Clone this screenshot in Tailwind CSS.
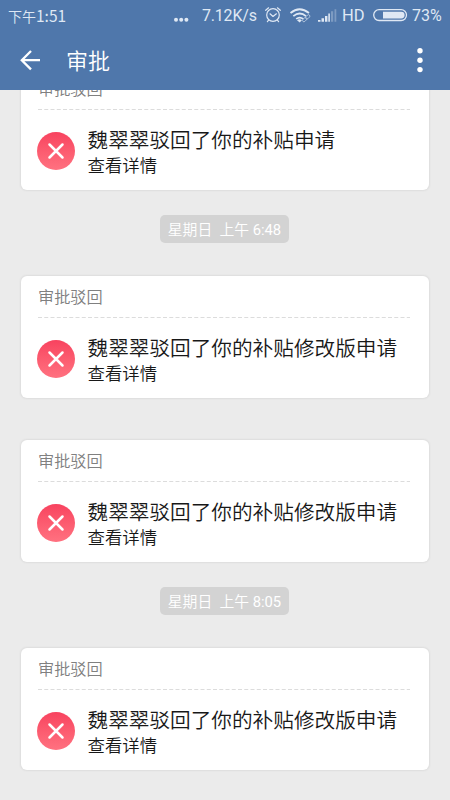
<!DOCTYPE html>
<html lang="zh-CN">
<head>
<meta charset="utf-8">
<meta name="viewport" content="width=device-width, initial-scale=1">
<title>审批</title>
<script src="https://cdn.jsdelivr.net/npm/@tailwindcss/browser@4"></script>
</head>
<body class="flex h-[800px] w-[450px] flex-col overflow-hidden bg-[#ebebeb] font-['Roboto','Noto_Sans_CJK_SC',sans-serif]">
<header class="h-[90px] shrink-0 bg-[#4f77ab]">
  <div class="flex h-8 items-center whitespace-nowrap pl-2 text-[#dfe8f4]">
    <span class="w-[166px] text-[14px] font-[350] font-['Noto_Sans_CJK_SC',sans-serif]">下午<span class="text-[15.5px] font-normal font-['Noto_Sans_CJK_SC']">1:51</span></span>
    <svg class="h-8 w-[28px]" viewBox="0 0 28 32" fill="currentColor"><circle cx="2" cy="19.700" r="2"/><circle cx="7.200" cy="19.700" r="2"/><circle cx="12.400" cy="19.700" r="2"/></svg>
    <span class="w-[62px] text-[16px] font-['Roboto'] tracking-[-0.2px]">7.12K/s</span>
    <svg class="h-8 w-[24px]" viewBox="264 0 24 32" fill="none" stroke="currentColor" stroke-width="1.200" stroke-linecap="round" stroke-linejoin="round"><circle cx="273" cy="15" r="6.300"/><path d="M270 13.800l3 2.700 3.400-2.700M265.700 10.300l2.900-2.500M280.300 10.300l-2.900-2.500M268.600 20.200l-1.200 1.500M277.400 20.200l1.200 1.500"/></svg>
    <svg class="h-8 w-[28px]" viewBox="288 0 28 32" fill="none" stroke="currentColor" stroke-width="1.800"><path d="M290.500 13q9-7.600 18.500 0M293.300 16.100q6.500-5.300 12.700 0M296.200 18.900q3.500-2.700 7 0"/><path d="M297 20.200l2.700 2.300 2.200-2.200q-2.400-1.800-4.900-.1z" fill="currentColor" stroke="none"/><g stroke-width=".9" opacity=".7"><rect x="302.200" y="18.200" width="5" height="2.800" rx="1.400" transform="rotate(-45 304.700 19.600)"/><rect x="305.200" y="15.500" width="5" height="2.800" rx="1.400" transform="rotate(-45 307.700 16.900)"/></g></svg>
    <svg class="h-8 w-[26px]" viewBox="316 0 26 32" fill="currentColor"><path d="M318 20h2.500v1.700H318zM321.500 18.200h2.500v3.500h-2.500zM325 16h2.400v5.700H325z"/><path d="M328.300 13.500h1.600v8.200h-1.600z"/><path opacity=".32" d="M331 11.200h2.200v10.500H331zM334.500 9.200h1.800v12.500h-1.800z"/></svg>
    <span class="w-[30px] text-[16.5px] font-['Roboto']">HD</span>
    <svg class="h-8 w-[40px]" viewBox="372 0 40 32" fill="none" stroke="currentColor" stroke-width="1.300"><rect x="373.700" y="9.700" width="32.800" height="10.800" rx="5.400"/><path d="M383 11.700h18.200a3.400 3.400 0 0 1 0 6.800H383z" fill="currentColor" stroke="none"/></svg>
    <span class="text-[16px] font-['Roboto']">73%</span>
  </div>
  <div class="flex h-[58px] items-center text-white">
    <svg class="h-[58px] w-[66px]" viewBox="0 32 66 58" fill="none" stroke="currentColor" stroke-width="2.300"><path d="M40 60.200H22M31 51l-9.200 9.200 9.200 9.200"/></svg>
    <h1 class="grow pt-[2px] text-[22px] leading-none font-[350]">审批</h1>
    <svg class="h-[58px] w-[40px]" viewBox="410 32 40 58" fill="currentColor"><circle cx="420" cy="50.700" r="2.700"/><circle cx="420" cy="60.200" r="2.700"/><circle cx="420" cy="69.600" r="2.700"/></svg>
  </div>
</header>
<main class="flex min-h-0 grow flex-col items-center overflow-hidden">
  <article class="-mt-[22px] h-[122px] w-[408px] shrink-0 rounded-[6px] bg-white pl-[16px] shadow-[0_0_2px_1px_rgba(0,0,0,0.06)]">
    <div class="flex h-[41px] items-center pt-[3px] pl-[1px] text-[16.2px] leading-none font-[350] text-[#808080]">审批驳回</div>
    <svg class="ml-[1px] block h-px w-[372px]"><path d="M0 .5H372" stroke="#dcdcdc" stroke-dasharray="4 2.250"/></svg>
    <div class="flex h-[80px] items-center pt-[1px]">
      <div class="mr-[12.500px] flex size-[38px] items-center justify-center rounded-full bg-linear-to-b from-[#f8425f] to-[#ff7180]"><svg class="size-[38px]" viewBox="0 0 38 38"><path d="M12.500 12.500l13 13M25.500 12.500l-13 13" stroke="white" stroke-width="2.500" stroke-linecap="round"/></svg></div>
      <div class="pt-[4px] font-[350] whitespace-nowrap text-[#181818]"><h2 class="text-[20.65px] leading-[28px]">魏翠翠驳回了你的补贴申请</h2><p class="text-[17.4px] leading-[23px]">查看详情</p></div>
    </div>
  </article>
  <time class="mt-[25px] mr-[1px] flex h-[28px] w-[129px] shrink-0 items-center justify-center rounded-[5px] bg-[#d3d3d3] pt-[2px] text-[14.8px] leading-none font-[350] whitespace-pre text-white">星期日  上午 <span class="font-normal">6:48</span></time>
  <article class="mt-[33px] h-[122px] w-[408px] shrink-0 rounded-[6px] bg-white pl-[16px] shadow-[0_0_2px_1px_rgba(0,0,0,0.06)]">
    <div class="flex h-[41px] items-center pt-[3px] pl-[1px] text-[16.2px] leading-none font-[350] text-[#808080]">审批驳回</div>
    <svg class="ml-[1px] block h-px w-[372px]"><path d="M0 .5H372" stroke="#dcdcdc" stroke-dasharray="4 2.250"/></svg>
    <div class="flex h-[80px] items-center pt-[1px]">
      <div class="mr-[12.500px] flex size-[38px] items-center justify-center rounded-full bg-linear-to-b from-[#f8425f] to-[#ff7180]"><svg class="size-[38px]" viewBox="0 0 38 38"><path d="M12.500 12.500l13 13M25.500 12.500l-13 13" stroke="white" stroke-width="2.500" stroke-linecap="round"/></svg></div>
      <div class="pt-[4px] font-[350] whitespace-nowrap text-[#181818]"><h2 class="text-[20.65px] leading-[28px]">魏翠翠驳回了你的补贴修改版申请</h2><p class="text-[17.4px] leading-[23px]">查看详情</p></div>
    </div>
  </article>
  <article class="mt-[42px] h-[122px] w-[408px] shrink-0 rounded-[6px] bg-white pl-[16px] shadow-[0_0_2px_1px_rgba(0,0,0,0.06)]">
    <div class="flex h-[41px] items-center pt-[3px] pl-[1px] text-[16.2px] leading-none font-[350] text-[#808080]">审批驳回</div>
    <svg class="ml-[1px] block h-px w-[372px]"><path d="M0 .5H372" stroke="#dcdcdc" stroke-dasharray="4 2.250"/></svg>
    <div class="flex h-[80px] items-center pt-[1px]">
      <div class="mr-[12.500px] flex size-[38px] items-center justify-center rounded-full bg-linear-to-b from-[#f8425f] to-[#ff7180]"><svg class="size-[38px]" viewBox="0 0 38 38"><path d="M12.500 12.500l13 13M25.500 12.500l-13 13" stroke="white" stroke-width="2.500" stroke-linecap="round"/></svg></div>
      <div class="pt-[4px] font-[350] whitespace-nowrap text-[#181818]"><h2 class="text-[20.65px] leading-[28px]">魏翠翠驳回了你的补贴修改版申请</h2><p class="text-[17.4px] leading-[23px]">查看详情</p></div>
    </div>
  </article>
  <time class="mt-[25px] mr-[1px] flex h-[28px] w-[129px] shrink-0 items-center justify-center rounded-[5px] bg-[#d3d3d3] pt-[2px] text-[14.8px] leading-none font-[350] whitespace-pre text-white">星期日  上午 <span class="font-normal">8:05</span></time>
  <article class="mt-[33px] h-[122px] w-[408px] shrink-0 rounded-[6px] bg-white pl-[16px] shadow-[0_0_2px_1px_rgba(0,0,0,0.06)]">
    <div class="flex h-[41px] items-center pt-[3px] pl-[1px] text-[16.2px] leading-none font-[350] text-[#808080]">审批驳回</div>
    <svg class="ml-[1px] block h-px w-[372px]"><path d="M0 .5H372" stroke="#dcdcdc" stroke-dasharray="4 2.250"/></svg>
    <div class="flex h-[80px] items-center pt-[1px]">
      <div class="mr-[12.500px] flex size-[38px] items-center justify-center rounded-full bg-linear-to-b from-[#f8425f] to-[#ff7180]"><svg class="size-[38px]" viewBox="0 0 38 38"><path d="M12.500 12.500l13 13M25.500 12.500l-13 13" stroke="white" stroke-width="2.500" stroke-linecap="round"/></svg></div>
      <div class="pt-[4px] font-[350] whitespace-nowrap text-[#181818]"><h2 class="text-[20.65px] leading-[28px]">魏翠翠驳回了你的补贴修改版申请</h2><p class="text-[17.4px] leading-[23px]">查看详情</p></div>
    </div>
  </article>
</main>
</body>
</html>
